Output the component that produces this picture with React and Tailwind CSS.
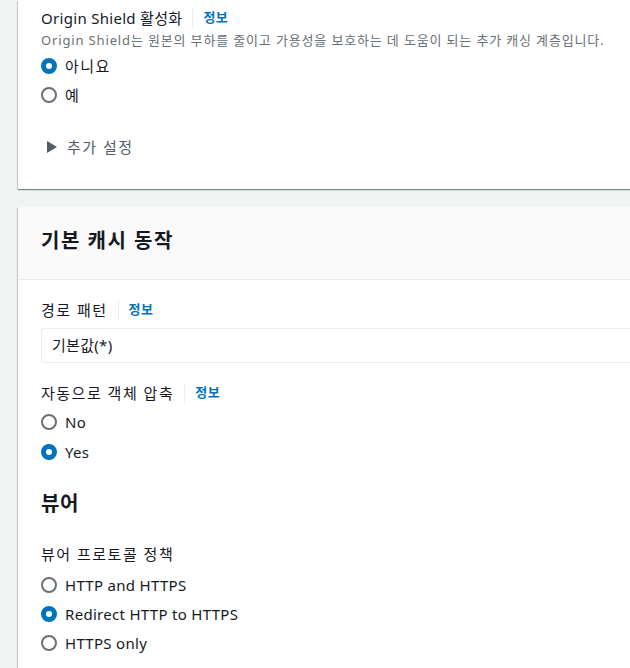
import React from "react";

const font = { fontFamily: '"Noto Sans", "Noto Sans CJK KR", sans-serif' };

// ko: Korean text sits wider in the reference, so it gets extra tracking
const Radio = ({ checked, label, ko }) => (
  <label
    className={
      "flex items-center h-[22px] text-[15px] text-[#16191f] " +
      (ko ? "tracking-[1.5px]" : "tracking-[0.3px]")
    }
  >
    {checked ? (
      <span className="w-4 h-4 rounded-full border-[5px] border-[#0073bb] bg-white mr-[8px] shrink-0" />
    ) : (
      <span className="w-4 h-4 rounded-full border-2 border-[#687078] bg-white mr-[8px] shrink-0" />
    )}
    {label}
  </label>
);

const Label = ({ text, info, ko }) => (
  <div
    className={
      "flex items-center h-[22px] text-[15px] text-[#16191f] " +
      (ko ? "tracking-[1.5px]" : "tracking-[0.3px]")
    }
  >
    <span>{text}</span>
    {info && (
      <>
        <span className="mx-[10px] w-px h-[20px] bg-[#eaeded]" />
        <span className="text-[13px] tracking-[0.5px] font-bold text-[#0073bb]">정보</span>
      </>
    )}
  </div>
);

const Card = ({ children, className = "" }) => (
  <div
    className={
      "bg-white shadow-[0_1px_1px_0_rgba(0,28,36,0.3),1px_1px_1px_0_rgba(0,28,36,0.15),-1px_1px_1px_0_rgba(0,28,36,0.15)] " +
      className
    }
  >
    {children}
  </div>
);

export default function App() {
  return (
    <div className="min-h-screen bg-[#f2f3f3] overflow-hidden" style={font}>
      <div className="pl-[18px] w-[720px] flex flex-col gap-[18px]">
        {/* Origin Shield */}
        <Card className="px-[23px] pt-[7px] pb-[31px]">
          <Label text="Origin Shield 활성화" info />
          <p className="text-[13px] leading-[18px] tracking-[0.85px] mt-[2px] text-[#687078]">
            Origin Shield는 원본의 부하를 줄이고 가용성을 보호하는 데 도움이 되는 추가 캐싱 계층입니다.
          </p>
          <div className="mt-[6px] flex flex-col gap-[7px]">
            <Radio checked ko label="아니요" />
            <Radio ko label="예" />
          </div>
          <div className="mt-[30px] flex items-center h-[22px] text-[15px] tracking-[1.5px] text-[#545b64]">
            <span className="ml-[6px] mr-[10px] w-0 h-0 border-y-[6px] border-y-transparent border-l-[10px] border-l-[#545b64]" />
            추가 설정
          </div>
        </Card>

        {/* 기본 캐시 동작 */}
        <Card className="min-h-[500px]">
          <div className="bg-[#fafafa] border-b border-[#eaeded] px-[23px] pt-[21px] pb-[25px]">
            <h2 className="text-[20px] leading-[26px] tracking-[1.5px] font-bold text-[#16191f]">기본 캐시 동작</h2>
          </div>
          <div className="px-[23px] pt-[19px]">
            <Label ko text="경로 패턴" info />
            <div className="mt-[7px] h-[35px] border border-[#eaeded] rounded-[2px] px-[10px] flex items-center text-[15px] tracking-[0.3px] text-[#16191f]">
              기본값(*)
            </div>
            <div className="mt-[19px]">
              <Label ko text="자동으로 객체 압축" info />
            </div>
            <div className="mt-[7px] flex flex-col gap-[8px]">
              <Radio label="No" />
              <Radio checked label="Yes" />
            </div>
            <h2 className="mt-[28px] text-[20px] leading-[26px] tracking-[0.5px] font-bold text-[#16191f]">뷰어</h2>
            <div className="mt-[26px]">
              <Label ko text="뷰어 프로토콜 정책" />
            </div>
            <div className="mt-[9px] flex flex-col gap-[7px]">
              <Radio label="HTTP and HTTPS" />
              <Radio checked label="Redirect HTTP to HTTPS" />
              <Radio label="HTTPS only" />
            </div>
          </div>
        </Card>
      </div>
    </div>
  );
}
